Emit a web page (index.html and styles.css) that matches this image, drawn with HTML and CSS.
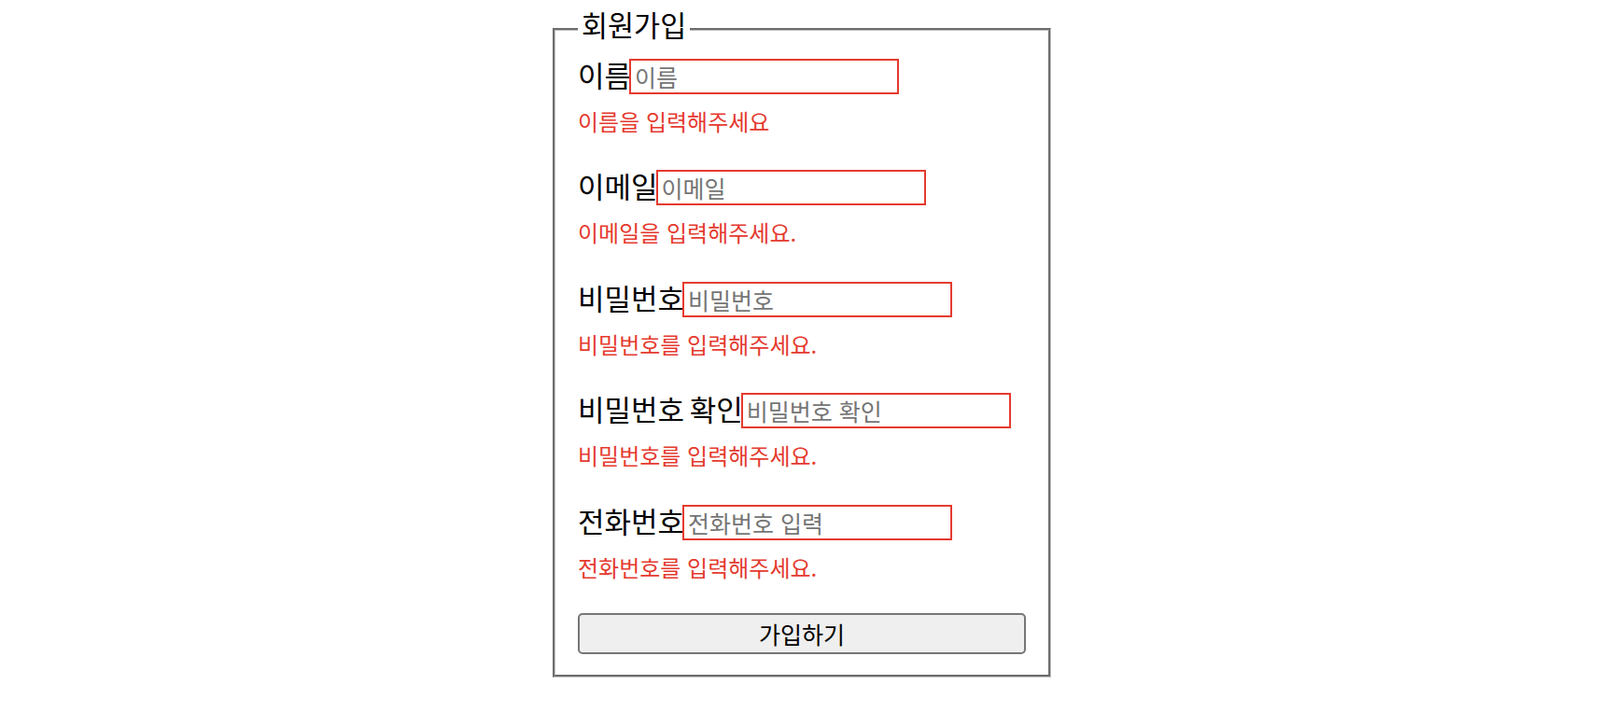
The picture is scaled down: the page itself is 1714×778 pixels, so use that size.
FILE: index.html
```html
<!DOCTYPE html>
<html lang="ko">
<head>
<meta charset="utf-8">
<title>회원가입</title>
<link rel="stylesheet" href="styles.css">
</head>
<body>
<form class="signup">
  <fieldset class="box">
    <legend class="title">회원가입</legend>
    <div class="field">
      <div class="row"><label class="label">이름</label><input class="input" type="text" placeholder="이름"></div>
      <p class="error">이름을 입력해주세요</p>
    </div>
    <div class="field">
      <div class="row"><label class="label">이메일</label><input class="input" type="text" placeholder="이메일"></div>
      <p class="error">이메일을 입력해주세요.</p>
    </div>
    <div class="field">
      <div class="row"><label class="label">비밀번호</label><input class="input" type="password" placeholder="비밀번호"></div>
      <p class="error">비밀번호를 입력해주세요.</p>
    </div>
    <div class="field">
      <div class="row"><label class="label">비밀번호 확인</label><input class="input" type="password" placeholder="비밀번호 확인"></div>
      <p class="error">비밀번호를 입력해주세요.</p>
    </div>
    <div class="field">
      <div class="row"><label class="label">전화번호</label><input class="input" type="text" placeholder="전화번호 입력"></div>
      <p class="error">전화번호를 입력해주세요.</p>
    </div>
    <button class="submit" type="button">가입하기</button>
  </fieldset>
</form>
</body>
</html>
```

FILE: styles.css
```css
html, body {
  margin: 0;
  padding: 0;
  background: #ffffff;
}

body {
  font-family: "Noto Sans CJK KR", "Noto Sans", sans-serif;
  color: #000000;
}

.signup {
  display: flex;
  justify-content: center;
  padding: 5.5px 0 0 4px;
}

.box {
  width: 480px;
  margin: 0;
  padding: 0 24px 22px;
  border: 3px groove #c0c0c0;
}

.title {
  font-size: 30.5px;
  line-height: 40px;
  padding: 0 4px 11px;
}

.field {
  margin: 0;
}

.row {
  display: flex;
  align-items: baseline;
}

.label {
  font-size: 31px;
  line-height: normal;
  word-spacing: -3px;
  margin-right: -2px;
}

.input {
  box-sizing: border-box;
  width: 289px;
  height: 38px;
  margin: 0;
  padding: 1px 4px;
  font-family: "Noto Sans CJK KR", "Noto Sans", sans-serif;
  font-size: 25px;
  border: 2px solid #e53a2f;
  border-radius: 0;
  outline: none;
  background: #ffffff;
}

.input::placeholder {
  color: #757575;
}

.error {
  margin: 10px 0 29.5px;
  font-size: 24px;
  line-height: normal;
  color: #e53a2f;
}

.submit {
  display: block;
  box-sizing: border-box;
  width: 480px;
  height: 44px;
  margin: 32px 0 0;
  padding: 0;
  font-family: "Noto Sans CJK KR", "Noto Sans", sans-serif;
  font-size: 25px;
  color: #000000;
  background: #efefef;
  border: 2px solid #767676;
  border-radius: 5px;
}
```
